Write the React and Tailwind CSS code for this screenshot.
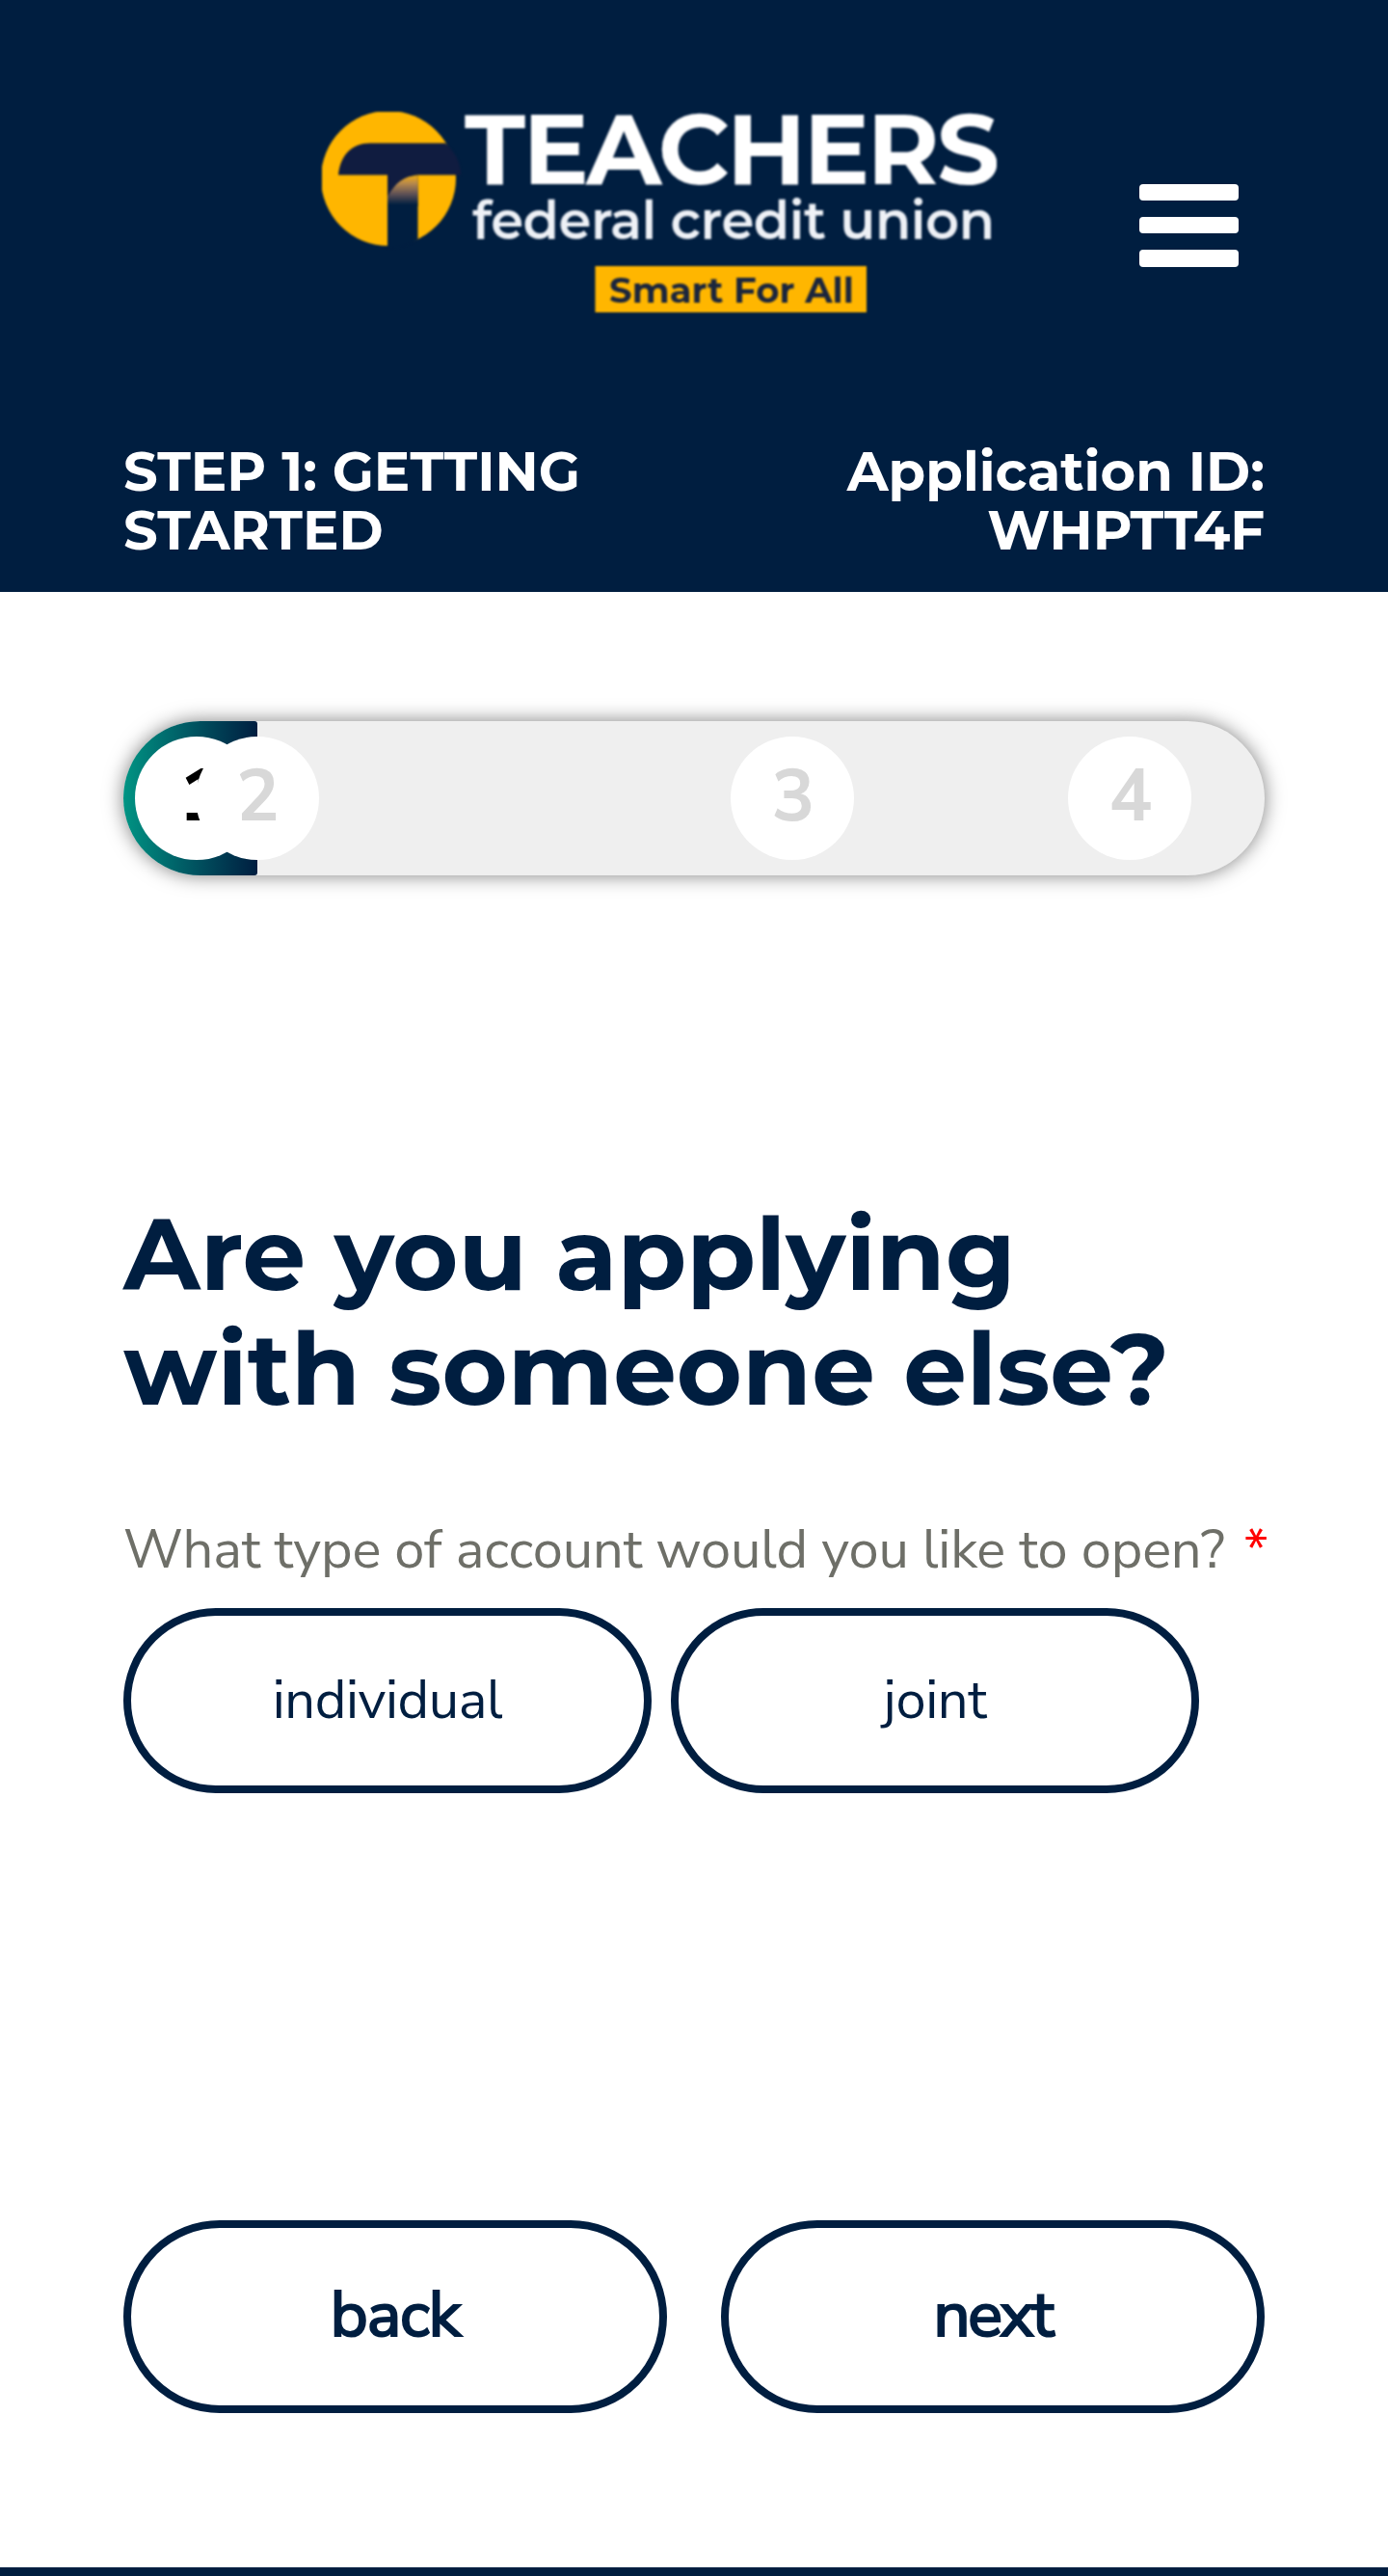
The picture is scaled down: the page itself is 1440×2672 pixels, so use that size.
import React from "react";

const STEPS = [
  { label: "1", place: "ml-3 pl-2 text-black" },
  { label: "2", place: "-ml-[65.5px] pl-0.5 text-[#d8d8d8]" },
  { label: "3", place: "ml-[427.5px] pl-0.5 text-[#d8d8d8]" },
  { label: "4", place: "ml-[222px] pl-0.5 text-[#d8d8d8]" },
];

function Logo() {
  return (
    <svg
      className="block h-[208px] w-[700px] blur-[0.8px]"
      viewBox="0 0 700 208"
      role="img"
      aria-label="Teachers Federal Credit Union"
    >
      <defs>
        <linearGradient id="stem" x1="0" y1="66" x2="0" y2="98" gradientUnits="userSpaceOnUse">
          <stop offset="0" stopColor="#f0ab10" />
          <stop offset="0.25" stopColor="#b98a4c" />
          <stop offset="0.6" stopColor="#5f5156" />
          <stop offset="0.95" stopColor="#001e40" />
        </linearGradient>
      </defs>
      <circle cx="69" cy="69" r="70" fill="#ffb600" />
      <path d="M68 66H99.5V132Q86 141 68 142Z" fill="#001e40" />
      <path d="M68 86Q78 66 99.5 66V98H68Z" fill="url(#stem)" />
      <path
        d="M17 65.5C19 45 31 32.5 50 32.5H128Q144 47 144 65.5H100C85 66 76 74 68 88V65.5Z"
        fill="#101c40"
      />
      <g fontFamily="Montserrat, Inter, sans-serif">
        <text x="148" y="75.3" fontSize="102" fontWeight="700" fill="#ffffff" textLength="555" lengthAdjust="spacing">
          TEACHERS
        </text>
        <text x="156" y="132" fontSize="54.5" fontWeight="600" fill="#eef1f6" textLength="542" lengthAdjust="spacing">
          federal credit union
        </text>
        <rect x="283.5" y="160" width="281.5" height="48" fill="#ffb600" />
        <text x="298" y="198" fontSize="37" fontWeight="700" fill="#1b263d" textLength="254" lengthAdjust="spacing">
          Smart For All
        </text>
      </g>
    </svg>
  );
}

function Header() {
  return (
    <header className="h-[614px] bg-[#001e40] pt-[116px] text-white">
      <div className="flex items-start pl-[334px]">
        <Logo />
        <button className="ml-[148px] mt-[75px] flex w-[103px] flex-col gap-[17px]" aria-label="Menu">
          <span className="h-[17.2px] w-full rounded bg-white" />
          <span className="h-[17.2px] w-full rounded bg-white" />
          <span className="h-[17.2px] w-full rounded bg-white" />
        </button>
      </div>
      <div className="mt-[135px] flex justify-between px-32 font-['Montserrat','Inter',sans-serif] text-[56px] leading-[61px] font-bold">
        <div className="w-[500px]">STEP 1: GETTING STARTED</div>
        <div className="w-[500px] text-right">
          Application ID:
          <br />
          WHPTT4F
        </div>
      </div>
    </header>
  );
}

function Progress() {
  return (
    <div className="relative mt-[134px] flex h-40 items-center rounded-full bg-[#efefef] shadow-[0_0_20px_rgba(0,0,0,0.5)]">
      <div className="absolute inset-y-0 left-0 w-[139px] rounded-l-[80px] rounded-r-[3px] bg-linear-to-r from-[#009483] to-[#001e40]" />
      {STEPS.map((s) => (
        <div
          key={s.label}
          className={`relative flex size-32 shrink-0 items-center justify-center rounded-full bg-white pb-1 text-[75px] leading-none font-bold ${s.place}`}
        >
          {s.label}
        </div>
      ))}
    </div>
  );
}

export default function App() {
  return (
    <div className="flex h-[2672px] w-[1440px] flex-col bg-white font-['Nunito_Sans','Nunito','Open_Sans',sans-serif] text-[#001e40]">
      <Header />
      <main className="px-32">
        <Progress />
        <h1 className="mt-[333px] font-['Montserrat','Inter',sans-serif] text-[104px] leading-[119px] font-bold">
          Are you applying
          <br />
          with someone else?
        </h1>
        <p className="mt-[91px] flex text-[56px] leading-[76px] whitespace-nowrap text-[#6e6f68]">
          <span className="tracking-[-0.14px]">What type of account would you like to open?</span>
          <span className="ml-[20px] text-[#ff0000]">*</span>
        </p>
        <div className="mt-[22px] flex gap-5 text-[56px] leading-none font-normal tracking-[-0.4px]">
          <button className="h-[192px] w-[548px] rounded-full border-8 border-[#001e40]">individual</button>
          <button className="h-[192px] w-[548px] rounded-full border-8 border-[#001e40]">joint</button>
        </div>
        <div className="mt-[443px] flex justify-between text-[67px] leading-none font-normal [-webkit-text-stroke:2.2px_#001e40]">
          <button className="h-[200px] w-[564px] rounded-full border-8 border-[#001e40] pb-1 tracking-[-1.2px]">back</button>
          <button className="h-[200px] w-[564px] rounded-full border-8 border-[#001e40] pb-1 tracking-[-2.3px]">next</button>
        </div>
      </main>
      <footer className="mt-auto h-[9px] bg-[#001e40]" />
    </div>
  );
}
